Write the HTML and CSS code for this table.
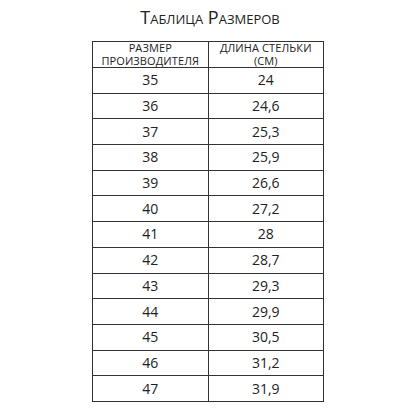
FILE: index.html
```html
<!DOCTYPE html>
<html lang="ru">
<head>
<meta charset="utf-8">
<link rel="stylesheet" href="styles.css">
</head>
<body>
<div class="page">
  <div class="title">Таблица Размеров</div>
  <table class="sizes">
    <thead>
      <tr><th>Размер<br>производителя</th><th>Длина стельки<br>(см)</th></tr>
    </thead>
    <tbody>
      <tr><td>35</td><td>24</td></tr>
      <tr><td>36</td><td>24,6</td></tr>
      <tr><td>37</td><td>25,3</td></tr>
      <tr><td>38</td><td>25,9</td></tr>
      <tr><td>39</td><td>26,6</td></tr>
      <tr><td>40</td><td>27,2</td></tr>
      <tr><td>41</td><td>28</td></tr>
      <tr><td>42</td><td>28,7</td></tr>
      <tr><td>43</td><td>29,3</td></tr>
      <tr><td>44</td><td>29,9</td></tr>
      <tr><td>45</td><td>30,5</td></tr>
      <tr><td>46</td><td>31,2</td></tr>
      <tr><td>47</td><td>31,9</td></tr>
    </tbody>
  </table>
</div>
</body>
</html>
```
FILE: styles.css
```css
html, body {
  margin: 0;
  padding: 0;
  background: #fff;
}
body {
  font-family: "Open Sans", "Noto Sans", sans-serif;
  color: #222;
}
.page {
  width: 420px;
  height: 420px;
  display: flex;
  flex-direction: column;
}
.title {
  box-sizing: border-box;
  height: 41px;
  padding-top: 5px;
  line-height: 24px;
  font-size: 18px;
  font-variant: small-caps;
  text-align: center;
}
.sizes {
  margin-left: 92px;
  width: 232px;
  border-collapse: collapse;
  table-layout: fixed;
}
.sizes th,
.sizes td {
  border: 1px solid #333;
  padding: 0;
  text-align: center;
  vertical-align: middle;
}
.sizes th {
  height: 24px;
  font-weight: normal;
  font-size: 11px;
  line-height: 12.5px;
  text-transform: uppercase;
  letter-spacing: 0.1px;
  color: #222;
}
.sizes td {
  height: 24.7px;
  font-size: 14px;
  line-height: 16px;
}
```
